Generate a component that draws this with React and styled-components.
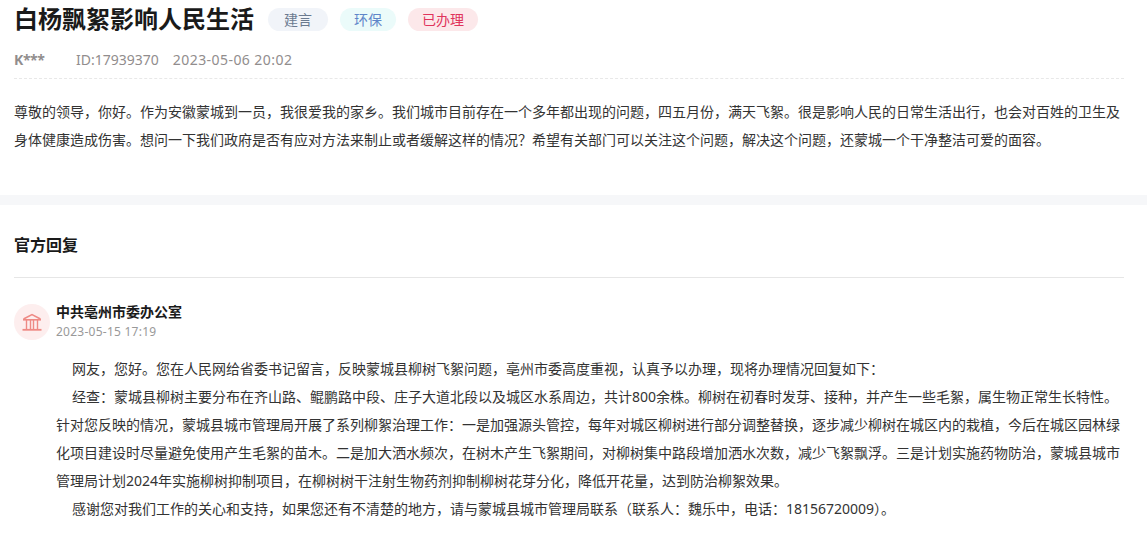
import React from "react";
import styled, { createGlobalStyle } from "styled-components";

const GlobalStyle = createGlobalStyle`
  html, body {
    margin: 0;
    padding: 0;
    background: #fff;
    font-family: "Noto Sans", "Noto Sans CJK SC", sans-serif;
  }
`;

const Page = styled.div`
  width: 1147px;
  height: 547px;
  overflow: hidden;
  background: #fff;
`;

const Question = styled.section`
  padding: 0 23px 0 14px;
  height: 195px;
`;

const TitleRow = styled.div`
  display: flex;
  align-items: center;
  height: 38px;
`;

const Title = styled.h1`
  margin: 0 14px 0 0;
  font-size: 24px;
  line-height: 38px;
  font-weight: 700;
  color: #1a1a1a;
`;

const Tag = styled.span`
  display: inline-block;
  height: 23px;
  line-height: 23px;
  padding: 0 ${(p) => p.$pad || 14}px;
  margin-right: 12px;
  border-radius: 12px;
  font-size: 14px;
  color: ${(p) => p.$color};
  background: ${(p) => p.$bg};
`;

const Meta = styled.div`
  display: flex;
  align-items: center;
  height: 24px;
  margin-top: 9px;
  padding-bottom: 7px;
  border-bottom: 1px dashed #e8e8e8;
  font-size: 14px;
  color: #918d8d;
`;

const Author = styled.span`
  width: 62px;
  font-weight: 700;
  letter-spacing: -0.4px;
`;

const MetaId = styled.span`
  margin-right: 14px;
`;

const MetaDate = styled.span`
  letter-spacing: 0.44px;
`;

const Body = styled.p`
  margin: 19px 0 0;
  font-size: 14px;
  line-height: 28px;
  color: #333;
`;

const Band = styled.div`
  height: 10px;
  background: #f6f7f9;
`;

const Reply = styled.section`
  padding: 0 0 0 14px;
`;

const ReplyTitle = styled.h2`
  margin: 0 23px 0 0;
  height: 72px;
  line-height: 80px;
  font-size: 16px;
  font-weight: 700;
  color: #1a1a1a;
  border-bottom: 1px solid #e6e6e6;
`;

const Office = styled.div`
  display: flex;
  align-items: center;
  gap: 6px;
  margin-top: 24px;
`;

const Avatar = styled.div`
  display: flex;
  align-items: center;
  justify-content: center;
  width: 36px;
  height: 36px;
  border-radius: 50%;
  background: #fdeeee;
`;

const OfficeName = styled.div`
  font-size: 14px;
  line-height: 20px;
  font-weight: 700;
  color: #1a1a1a;
`;

const OfficeTime = styled.div`
  margin-top: 1px;
  font-size: 12px;
  line-height: 18px;
  letter-spacing: 0.25px;
  color: #999;
`;

const ReplyBody = styled.div`
  margin: 14px 21px 0 42px;
  font-size: 14px;
  line-height: 28px;
  color: #333;
`;

const Para = styled.p`
  margin: 0;
  text-indent: 16px;
`;

const BuildingIcon = () => (
  <svg width="20" height="18" viewBox="0 0 20 18" fill="none" stroke="#ee8a85">
    <path d="M1.5 6 10 1.5 18.5 6" strokeWidth="1.5" />
    <path d="M1 6.8h18" strokeWidth="1.6" />
    <path d="M4.5 7v9M8.5 7v9M11.5 7v9M15.5 7v9" strokeWidth="1.4" />
    <path d="M0.5 16.8h19" strokeWidth="1.8" />
  </svg>
);

export default function App() {
  return (
    <Page>
      <GlobalStyle />
      <Question>
        <TitleRow>
          <Title>白杨飘絮影响人民生活</Title>
          <Tag $pad={16} $color="#6b7a90" $bg="#f1f4f9">建言</Tag>
          <Tag $color="#5f86c9" $bg="#ebfbfa">环保</Tag>
          <Tag $color="#e0345c" $bg="#fce8ea">已办理</Tag>
        </TitleRow>
        <Meta>
          <Author>K***</Author>
          <MetaId>ID:17939370</MetaId>
          <MetaDate>2023-05-06 20:02</MetaDate>
        </Meta>
        <Body>
          尊敬的领导，你好。作为安徽蒙城到一员，我很爱我的家乡。我们城市目前存在一个多年都出现的问题，四五月份，满天飞絮。很是影响人民的日常生活出行，也会对百姓的卫生及身体健康造成伤害。想问一下我们政府是否有应对方法来制止或者缓解这样的情况？希望有关部门可以关注这个问题，解决这个问题，还蒙城一个干净整洁可爱的面容。
        </Body>
      </Question>
      <Band />
      <Reply>
        <ReplyTitle>官方回复</ReplyTitle>
        <Office>
          <Avatar><BuildingIcon /></Avatar>
          <div>
            <OfficeName>中共亳州市委办公室</OfficeName>
            <OfficeTime>2023-05-15 17:19</OfficeTime>
          </div>
        </Office>
        <ReplyBody>
          <Para>网友，您好。您在人民网给省委书记留言，反映蒙城县柳树飞絮问题，亳州市委高度重视，认真予以办理，现将办理情况回复如下：</Para>
          <Para>经查：蒙城县柳树主要分布在齐山路、鲲鹏路中段、庄子大道北段以及城区水系周边，共计800余株。柳树在初春时发芽、接种，并产生一些毛絮，属生物正常生长特性。针对您反映的情况，蒙城县城市管理局开展了系列柳絮治理工作：一是加强源头管控，每年对城区柳树进行部分调整替换，逐步减少柳树在城区内的栽植，今后在城区园林绿化项目建设时尽量避免使用产生毛絮的苗木。二是加大洒水频次，在树木产生飞絮期间，对柳树集中路段增加洒水次数，减少飞絮飘浮。三是计划实施药物防治，蒙城县城市管理局计划2024年实施柳树抑制项目，在柳树树干注射生物药剂抑制柳树花芽分化，降低开花量，达到防治柳絮效果。</Para>
          <Para>感谢您对我们工作的关心和支持，如果您还有不清楚的地方，请与蒙城县城市管理局联系（联系人：魏乐中，电话：18156720009）。</Para>
        </ReplyBody>
      </Reply>
    </Page>
  );
}
